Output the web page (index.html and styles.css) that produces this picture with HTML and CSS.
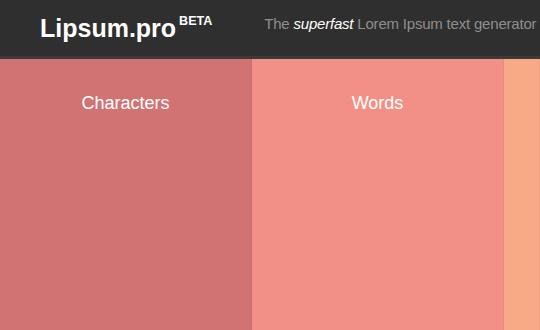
FILE: index.html
```html
<!DOCTYPE html>
<html lang="en">
<head>
    <meta charset="UTF-8">
    <title>Lipsum.pro</title>
    <link rel="stylesheet" href="styles.css">
</head>
<body>
    <header class="topbar">
        <h1 class="logo">Lipsum.pro<sup class="beta">BETA</sup></h1>
        <p class="tagline">The <em>superfast</em> Lorem Ipsum text generator</p>
    </header>
    <main class="columns">
        <section class="col col-chars"><h2>Characters</h2></section>
        <section class="col col-words"><h2>Words</h2></section>
        <section class="col col-paras"></section>
    </main>
</body>
</html>
```

FILE: styles.css
```css
body, html {
    margin: 0;
    padding: 0;
    height: 100%;
    overflow: hidden;
    font-family: "Liberation Sans", Arial, sans-serif;
}
.topbar {
    display: flex;
    align-items: center;
    height: 56px;
    padding-left: 40px;
    background: #2f2f2f;
    border-bottom: 3px solid #3b3b3b;
    white-space: nowrap;
    overflow: hidden;
}
.logo {
    margin: 0;
    font-size: 25px;
    font-weight: bold;
    color: #fff;
}
.beta {
    font-size: 12.5px;
    margin-left: 3px;
    position: relative;
    top: -2px;
}
.tagline {
    margin: 0 0 9px 52px;
    font-size: 15px;
    letter-spacing: -0.2px;
    color: #8e8e8e;
}
.tagline em {
    color: #fff;
}
.columns {
    display: grid;
    grid-template-columns: 252px 252px 1fr;
    height: calc(100% - 59px);
}
.col {
    border-right: 1px solid rgba(0, 0, 0, 0.03);
    text-align: center;
}
.col h2 {
    margin: 34px 0 0;
    font-size: 18px;
    font-weight: normal;
    color: #fff;
}
.col-chars { background: #d07372; }
.col-words { background: #f28f86; }
.col-paras { background: #f8aa87; }
```
